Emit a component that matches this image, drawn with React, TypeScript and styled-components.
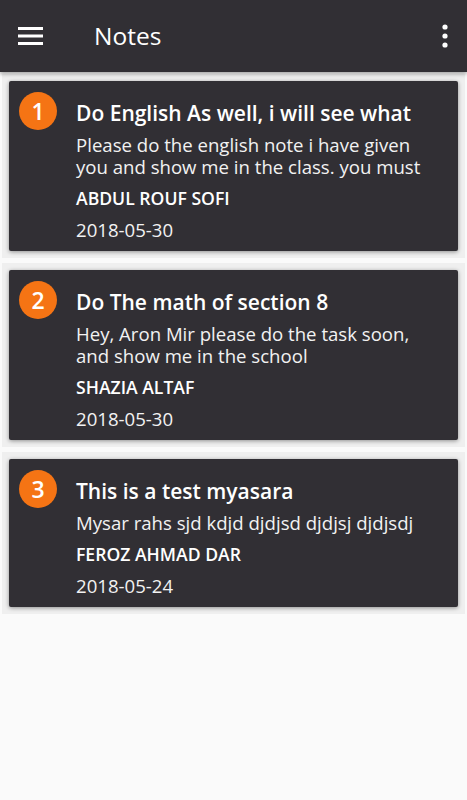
import styled, { createGlobalStyle } from 'styled-components'

const GlobalStyle = createGlobalStyle`
  html, body {
    margin: 0;
    padding: 0;
    background: #fafafa;
    font-family: 'Open Sans', 'Noto Sans', sans-serif;
  }
`

const Screen = styled.div`
  width: 467px;
  min-height: 800px;
  background: #fafafa;
`

const AppBar = styled.header`
  height: 72px;
  background: #312f34;
  display: flex;
  align-items: center;
  padding: 0 18px;
  box-sizing: border-box;
  box-shadow: 0 2px 4px rgba(0, 0, 0, 0.35);
  position: relative;
  z-index: 1;
`

const Title = styled.h1`
  flex: 1;
  margin: 0 0 0 50px;
  font-size: 24.5px;
  font-weight: 400;
  color: #ffffff;
  line-height: 72px;
`

const IconButton = styled.div`
  display: flex;
  align-items: center;
  justify-content: center;
`

const List = styled.div`
  display: flex;
  flex-direction: column;
  gap: 5px;
  padding: 2px 2px 0;
`

const Item = styled.div`
  background: #efefef;
  padding: 7px;
`

const Card = styled.div`
  background: #312f34;
  border-radius: 2px;
  box-shadow: 0 1px 4px rgba(0, 0, 0, 0.4);
  display: flex;
  padding: 11px 10px 10px;
`

const Badge = styled.div`
  width: 38px;
  height: 38px;
  border-radius: 50%;
  background: #f57414;
  color: #ffffff;
  font-size: 23px;
  font-weight: 600;
  display: flex;
  align-items: center;
  justify-content: center;
  flex-shrink: 0;
`

const Body = styled.div`
  margin-left: 19px;
  padding-top: 7px;
  display: flex;
  flex-direction: column;
  min-width: 0;
  white-space: nowrap;
`

const NoteTitle = styled.div`
  font-size: 21px;
  font-weight: 600;
  line-height: 28px;
  color: #ffffff;
`

const NoteText = styled.div`
  margin-top: 7px;
  font-size: 18.6px;
  line-height: 22px;
  color: #f2f2f2;
  white-space: pre;
`

const Author = styled.div`
  margin-top: 9px;
  font-size: 17.6px;
  font-weight: 600;
  line-height: 22px;
  color: #ffffff;
`

const DateText = styled.div`
  margin-top: 10px;
  font-size: 18.6px;
  line-height: 22px;
  color: #f2f2f2;
`

const notes = [
  {
    title: 'Do English As well, i will see what',
    text: ['Please do the english note i have given', 'you and show me in the class. you must'],
    author: 'ABDUL ROUF SOFI',
    date: '2018-05-30',
  },
  {
    title: 'Do The math of section 8',
    text: ['Hey, Aron Mir please do the task soon,', 'and show me in the school'],
    author: 'SHAZIA ALTAF',
    date: '2018-05-30',
  },
  {
    title: 'This is a test myasara',
    text: ['Mysar rahs sjd kdjd djdjsd djdjsj djdjsdj'],
    author: 'FEROZ AHMAD DAR',
    date: '2018-05-24',
  },
]

function App() {
  return (
    <Screen>
      <GlobalStyle />
      <AppBar>
        <IconButton>
          <svg width='26' height='20' viewBox='0 0 26 20'>
            <rect x='0' y='1' width='25' height='3' fill='#fff' />
            <rect x='0' y='8.5' width='25' height='3' fill='#fff' />
            <rect x='0' y='16' width='25' height='3' fill='#fff' />
          </svg>
        </IconButton>
        <Title>Notes</Title>
        <IconButton>
          <svg width='8' height='26' viewBox='0 0 8 26'>
            <circle cx='4' cy='4' r='2.6' fill='#fff' />
            <circle cx='4' cy='13' r='2.6' fill='#fff' />
            <circle cx='4' cy='22' r='2.6' fill='#fff' />
          </svg>
        </IconButton>
      </AppBar>
      <List>
        {notes.map((n, i) => (
          <Item key={i}>
            <Card>
              <Badge>{i + 1}</Badge>
              <Body>
                <NoteTitle>{n.title}</NoteTitle>
                <NoteText>{n.text.join('\n')}</NoteText>
                <Author>{n.author}</Author>
                <DateText>{n.date}</DateText>
              </Body>
            </Card>
          </Item>
        ))}
      </List>
    </Screen>
  )
}

export default App
